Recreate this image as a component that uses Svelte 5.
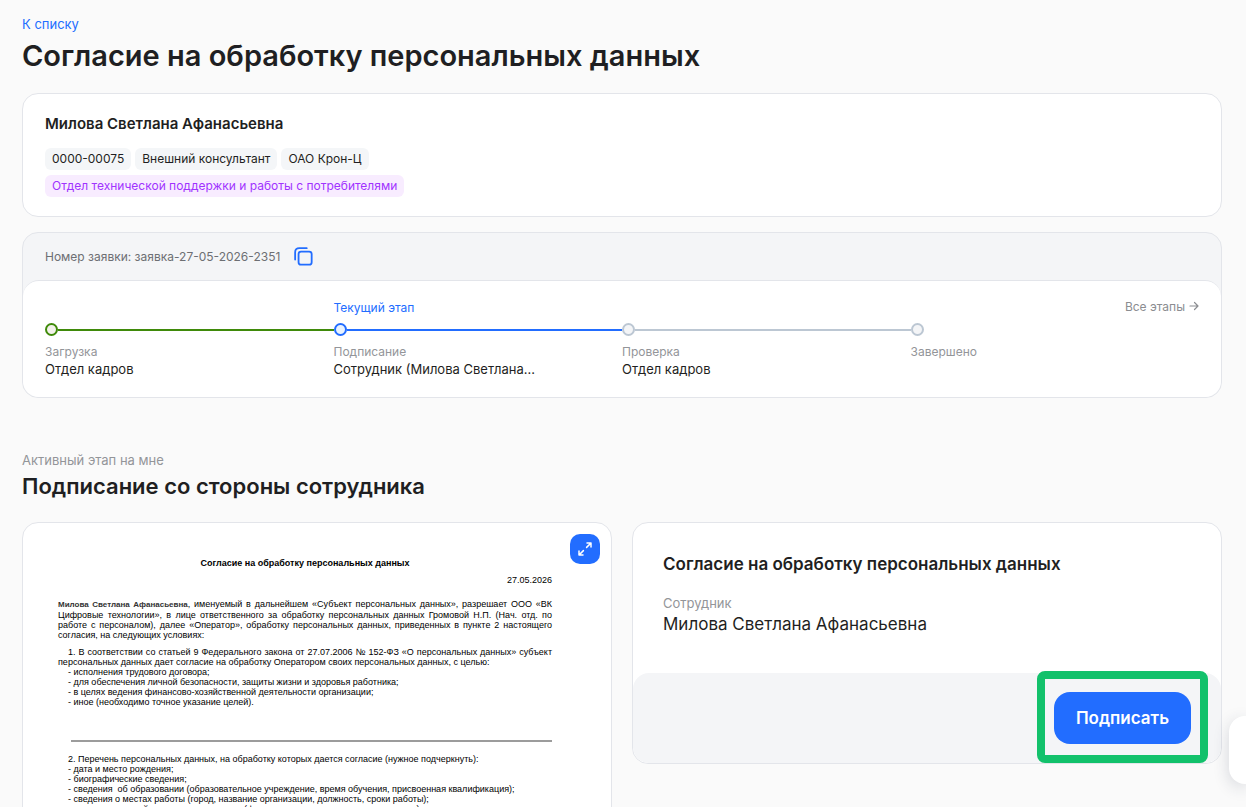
<script>
  const employee = "Милова Светлана Афанасьевна";
  const requestId = "заявка-27-05-2026-2351";

  const tags = ["0000-00075", "Внешний консультант", "ОАО Крон-Ц"];
  const department = "Отдел технической поддержки и работы с потребителями";

  const stages = [
    { state: "done", title: "Загрузка", who: "Отдел кадров" },
    { state: "current", title: "Подписание", who: "Сотрудник (Милова Светлана..." },
    { state: "pending", title: "Проверка", who: "Отдел кадров" },
    { state: "pending", title: "Завершено", who: "" },
  ];

  const purposes = [
    "исполнения трудового договора;",
    "для обеспечения личной безопасности, защиты жизни и здоровья работника;",
    "в целях ведения финансово-хозяйственной деятельности организации;",
    "иное (необходимо точное указание целей).",
  ];

  const dataItems = [
    "дата и место рождения;",
    "биографические сведения;",
    "сведения  об образовании (образовательное учреждение, время обучения, присвоенная квалификация);",
    "сведения о местах работы (город, название организации, должность, сроки работы);",
    "сведения о семейном положении, детях (фамилия, имя, отчество, дата рождения);",
  ];

  function copyId() {
    navigator.clipboard?.writeText(requestId);
  }
</script>

<main class="page">
  <a class="back" href="#list">К списку</a>
  <h1>Согласие на обработку персональных данных</h1>

  <section class="card person">
    <h2>{employee}</h2>
    <div class="tags">
      {#each tags as tag}
        <span class="tag">{tag}</span>
      {/each}
    </div>
    <div class="tags">
      <span class="tag purple">{department}</span>
    </div>
  </section>

  <section class="card request">
    <header>
      <span>Номер заявки: {requestId}</span>
      <button class="icon-btn" aria-label="Скопировать номер" onclick={copyId}>
        <svg width="19" height="19" viewBox="0 0 20 20" fill="none" stroke="currentColor" stroke-width="1.9" stroke-linecap="round">
          <rect x="4.8" y="4.8" width="13.8" height="13.8" rx="2.6" />
          <path d="M1.2 13.2V5.6C1.2 2.8 2.8 1.2 5.6 1.2H13.4" />
        </svg>
      </button>
    </header>

    <div class="stages-wrap">
      <ol class="stages">
        {#each stages as stage, i}
          <li class={stage.state}>
            <div class="stage-top">
              {#if stage.state === "current"}
                <span class="now">Текущий этап</span>
              {/if}
              {#if i === stages.length - 1}
                <button class="all">
                  Все этапы
                  <svg width="10" height="10" viewBox="0 0 10 10" fill="none" stroke="currentColor" stroke-width="1.2" stroke-linecap="round" stroke-linejoin="round">
                    <path d="M1 5H9M5.5 1.5L9 5L5.5 8.5" />
                  </svg>
                </button>
              {/if}
            </div>
            <div class="track">
              <i class="dot"></i>
              {#if i < stages.length - 1}<i class="line"></i>{/if}
            </div>
            <div class="stage-title">{stage.title}</div>
            <div class="stage-who">{stage.who}</div>
          </li>
        {/each}
      </ol>
    </div>
  </section>

  <p class="hint">Активный этап на мне</p>
  <h2 class="active-title">Подписание со стороны сотрудника</h2>

  <div class="columns">
    <section class="card preview">
      <button class="expand" aria-label="Развернуть документ">
        <svg width="16" height="16" viewBox="0 0 16 16" fill="none" stroke="currentColor" stroke-width="1.5" stroke-linecap="round" stroke-linejoin="round">
          <path d="M9.6 6.4L14 2M10 2H14V6M6.4 9.6L2 14M2 10V14H6" />
        </svg>
      </button>

      <article class="doc">
        <h3>Согласие на обработку персональных данных</h3>
        <p class="date">27.05.2026</p>
        <p class="intro">
          <span class="full"><b>{employee}</b>, именуемый в дальнейшем «Субъект персональных данных», разрешает ООО «ВК</span>
          <span class="full">Цифровые технологии», в лице ответственного за обработку персональных данных Громовой Н.П. (Нач. отд. по</span>
          <span class="full">работе с персоналом), далее «Оператор», обработку персональных данных, приведенных в пункте 2 настоящего</span>
          <span>согласия, на следующих условиях:</span>
        </p>
        <p>
          <span class="full indent">1. В соответствии со статьей 9 Федерального закона от 27.07.2006 № 152-ФЗ «О персональных данных» субъект</span>
          <span>персональных данных дает согласие на обработку Оператором своих персональных данных, с целью:</span>
        </p>
        <ul>
          {#each purposes as item}
            <li>- {item}</li>
          {/each}
        </ul>
        <hr />
        <p class="indent">2. Перечень персональных данных, на обработку которых дается согласие (нужное подчеркнуть):</p>
        <ul>
          {#each dataItems as item}
            <li>- {item}</li>
          {/each}
        </ul>
      </article>
    </section>

    <section class="card sign">
      <div class="sign-body">
        <h3>Согласие на обработку персональных данных</h3>
        <p class="role">Сотрудник</p>
        <p class="name">{employee}</p>
      </div>
      <footer>
        <div class="highlight">
          <button class="primary">Подписать</button>
        </div>
      </footer>
    </section>
  </div>
</main>

<button class="side-tab" aria-label="Открыть чат"></button>

<style>
  :global(body) {
    margin: 0;
    background: #fafafa;
  }

  .page {
    box-sizing: border-box;
    height: 100vh;
    overflow: hidden;
    padding: 14px 24px 0 22px;
    font-family: Inter, "Liberation Sans", sans-serif;
    color: #1f1f22;
  }

  h1, h2, h3, p, ul, ol {
    margin: 0;
    padding: 0;
    list-style: none;
  }

  button {
    padding: 0;
    border: none;
    background: none;
    font-family: inherit;
    cursor: pointer;
  }

  svg {
    display: block;
  }

  .back {
    display: block;
    width: fit-content;
    font-size: 13px;
    line-height: 20px;
    color: #226dff;
    text-decoration: none;
  }

  h1 {
    margin: 4px 0 19px;
    font-size: 29px;
    line-height: 36px;
    font-weight: 600;
  }

  .card {
    background: #fff;
    border: 1px solid #e3e5ea;
    border-radius: 16px;
  }

  /* ── Employee ── */
  .person {
    padding: 20px 22px 19px;
    margin-bottom: 15px;
  }

  .person h2 {
    margin-bottom: 14px;
    font-size: 15px;
    line-height: 20px;
    font-weight: 600;
  }

  .tags {
    display: flex;
    gap: 4px;
  }

  .tags + .tags {
    margin-top: 5px;
  }

  .tag {
    padding: 0 7px;
    border-radius: 6px;
    background: #f4f6f8;
    font-size: 12px;
    line-height: 22px;
  }

  .tag.purple {
    background: #f8ecff;
    color: #a133ff;
  }

  /* ── Request ── */
  .request {
    margin-bottom: 52px;
    background: #f4f5f7;
  }

  .request header {
    display: flex;
    align-items: center;
    gap: 14px;
    height: 47px;
    padding: 0 22px;
    font-size: 12px;
    color: #6d6f73;
  }

  .icon-btn {
    color: #226dff;
  }

  .stages-wrap {
    padding: 16px 22px 19px;
    border-top: 1px solid #e3e5ea;
    border-radius: 16px;
    background: #fff;
  }

  .stages {
    display: flex;
  }

  .stages li {
    flex: 1;
    min-width: 0;
  }

  .stage-top {
    display: flex;
    height: 26px;
    font-size: 12px;
    line-height: 22px;
  }

  .now {
    color: #226dff;
  }

  .all {
    display: flex;
    align-items: center;
    gap: 4px;
    height: 18px;
    margin-left: auto;
    font-size: 12px;
    color: #8b8d91;
  }

  .track {
    display: flex;
    align-items: center;
    height: 13px;
    color: #bcc7d3;
  }

  .done .track { color: #3f8a0a; }
  .current .track { color: #226dff; }

  .dot {
    box-sizing: border-box;
    width: 13px;
    height: 13px;
    border: 2px solid currentColor;
    border-radius: 50%;
    background: #f4f5f7;
  }

  .done .dot { background: #f3f1ea; }
  .current .dot { background: #e8f2ff; }

  .line {
    flex: 1;
    height: 2px;
    background: currentColor;
  }

  .stage-title {
    margin-top: 7px;
    font-size: 12px;
    line-height: 17px;
    color: #939599;
  }

  .stage-who {
    min-height: 18px;
    font-size: 13px;
    line-height: 18px;
  }

  /* ── Active stage ── */
  .hint {
    font-size: 13px;
    line-height: 20px;
    color: #939599;
  }

  .active-title {
    margin: 1px 0 21px;
    font-size: 22px;
    line-height: 30px;
    font-weight: 600;
  }

  .columns {
    display: grid;
    grid-template-columns: repeat(2, minmax(0, 1fr));
    gap: 20px;
    align-items: start;
  }

  /* ── Document preview ── */
  .preview {
    position: relative;
    padding: 34px 59px 24px 35px;
  }

  .expand {
    position: absolute;
    top: 11px;
    right: 11px;
    display: grid;
    place-items: center;
    width: 30px;
    height: 30px;
    border-radius: 10px;
    background: #226dff;
    color: #fff;
  }

  .doc {
    font-family: "Liberation Sans", Arial, sans-serif;
    font-size: 9px;
    line-height: 10px;
    color: #000;
  }

  .doc h3 {
    font-size: 9px;
    line-height: 12px;
    text-align: center;
  }

  .date {
    margin: 6px 0 14px;
    text-align: right;
  }

  .doc p span {
    display: block;
    white-space: nowrap;
  }

  .doc .full {
    text-align-last: justify;
  }

  .intro {
    margin-bottom: 7px;
  }

  .intro b {
    font-size: 8px;
    color: #333;
  }

  .doc .indent,
  .doc li {
    padding-left: 10px;
    white-space: pre;
  }

  hr {
    height: 2px;
    margin: 33px 0 12px 13px;
    border: none;
    background: #9c9c9c;
  }

  /* ── Signing ── */
  .sign-body {
    padding: 29px 30px 37px;
  }

  .sign h3 {
    margin-bottom: 18px;
    font-size: 17px;
    line-height: 24px;
    font-weight: 600;
  }

  .role {
    font-size: 13px;
    line-height: 18px;
    color: #939599;
  }

  .name {
    font-size: 17px;
    line-height: 24px;
  }

  .sign footer {
    display: flex;
    justify-content: flex-end;
    padding: 19px 30px;
    border-radius: 16px;
    background: #f4f5f7;
  }

  .highlight {
    position: relative;
  }

  .highlight::after {
    content: "";
    position: absolute;
    inset: -21px -17px -19px;
    border: 8px solid #12c16b;
    border-radius: 8px;
    pointer-events: none;
  }

  .primary {
    height: 52px;
    padding: 0 22px;
    border-radius: 16px;
    background: #226dff;
    font-size: 17px;
    font-weight: 600;
    color: #fff;
  }

  .side-tab {
    position: fixed;
    right: 0;
    bottom: 23px;
    width: 17px;
    height: 68px;
    border-radius: 16px 0 0 16px;
    background: #fff;
    box-shadow: 0 4px 16px rgba(40, 50, 80, 0.18);
  }
</style>
